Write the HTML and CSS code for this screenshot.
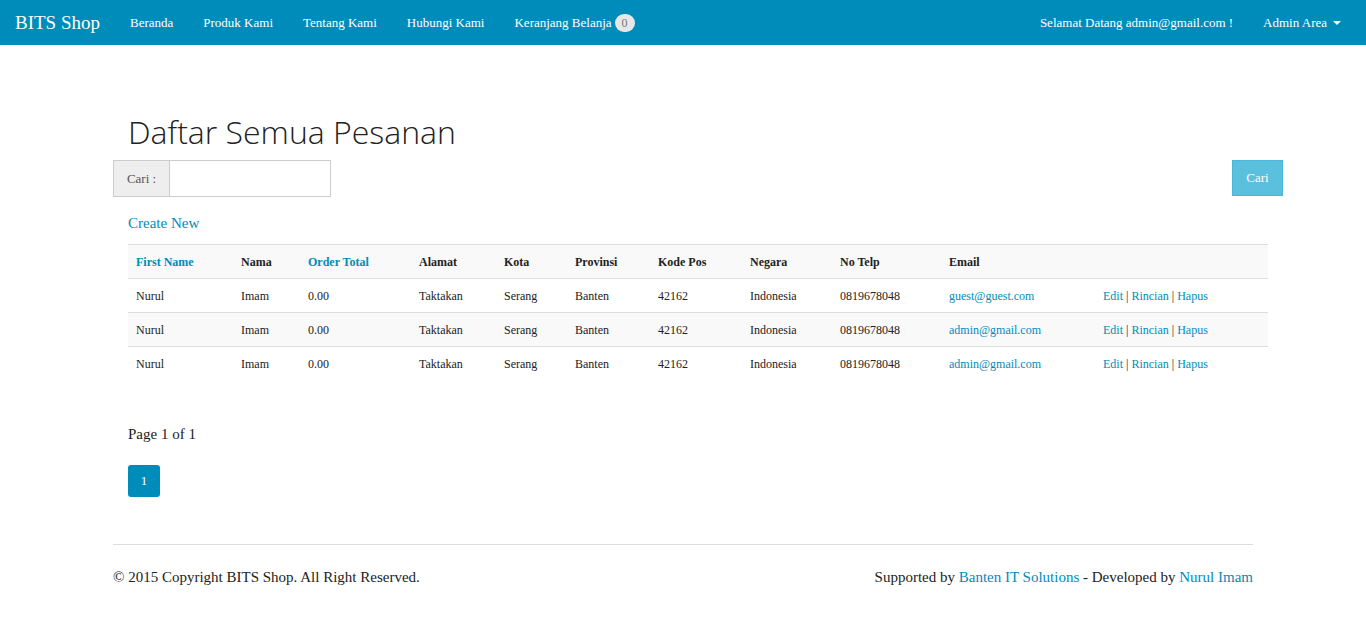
FILE: index.html
```html
<!DOCTYPE html>
<html>
<head>
<meta charset="utf-8">
<link rel="stylesheet" href="styles.css">
</head>
<body>
<nav class="navbar">
  <div class="nav-left">
    <a class="brand" href="#">BITS Shop</a>
    <a class="nav-link" href="#">Beranda</a>
    <a class="nav-link" href="#">Produk Kami</a>
    <a class="nav-link" href="#">Tentang Kami</a>
    <a class="nav-link" href="#">Hubungi Kami</a>
    <a class="nav-link" href="#">Keranjang Belanja <span class="badge">0</span></a>
  </div>
  <div class="nav-right">
    <a class="nav-link" href="#">Selamat Datang admin@gmail.com !</a>
    <a class="nav-link dropdown" href="#">Admin Area <span class="caret"></span></a>
  </div>
</nav>

<main class="container">
  <h2 class="title">Daftar Semua Pesanan</h2>
  <div class="search-row">
    <div class="input-group">
      <span class="addon">Cari :</span>
      <input class="form-control" type="text">
    </div>
    <button class="btn-info">Cari</button>
  </div>
  <p class="create"><a href="#">Create New</a></p>
  <table class="table">
    <thead>
      <tr>
        <th class="c1"><a href="#">First Name</a></th>
        <th class="c2">Nama</th>
        <th class="c3"><a href="#">Order Total</a></th>
        <th class="c4">Alamat</th>
        <th class="c5">Kota</th>
        <th class="c6">Provinsi</th>
        <th class="c7">Kode Pos</th>
        <th class="c8">Negara</th>
        <th class="c9">No Telp</th>
        <th class="c10">Email</th>
        <th class="c11"></th>
      </tr>
    </thead>
    <tbody>
      <tr>
        <td>Nurul</td><td>Imam</td><td>0.00</td><td>Taktakan</td><td>Serang</td><td>Banten</td><td>42162</td><td>Indonesia</td><td>0819678048</td>
        <td><a href="#">guest@guest.com</a></td>
        <td><a href="#">Edit</a> | <a href="#">Rincian</a> | <a href="#">Hapus</a></td>
      </tr>
      <tr>
        <td>Nurul</td><td>Imam</td><td>0.00</td><td>Taktakan</td><td>Serang</td><td>Banten</td><td>42162</td><td>Indonesia</td><td>0819678048</td>
        <td><a href="#">admin@gmail.com</a></td>
        <td><a href="#">Edit</a> | <a href="#">Rincian</a> | <a href="#">Hapus</a></td>
      </tr>
      <tr>
        <td>Nurul</td><td>Imam</td><td>0.00</td><td>Taktakan</td><td>Serang</td><td>Banten</td><td>42162</td><td>Indonesia</td><td>0819678048</td>
        <td><a href="#">admin@gmail.com</a></td>
        <td><a href="#">Edit</a> | <a href="#">Rincian</a> | <a href="#">Hapus</a></td>
      </tr>
    </tbody>
  </table>
  <p class="pageinfo">Page 1 of 1</p>
  <div class="pagination"><a class="page active" href="#">1</a></div>
  <hr class="rule">
  <footer class="footer">
    <span>© 2015 Copyright BITS Shop. All Right Reserved.</span>
    <span>Supported by <a href="#">Banten IT Solutions</a> - Developed by <a href="#">Nurul Imam</a></span>
  </footer>
</main>
</body>
</html>
```
FILE: styles.css
```css
* { box-sizing: border-box; }
body {
  margin: 0;
  font-family: "Liberation Serif", "Times New Roman", serif;
  font-size: 15px;
  color: #222;
  background: #fff;
}
a { color: #008cba; text-decoration: none; }

.navbar {
  height: 45px;
  background: #008cba;
  display: flex;
  justify-content: space-between;
  align-items: center;
  padding: 0 10px 0 15px;
}
.nav-left, .nav-right { display: flex; align-items: center; }
.brand { color: #fff; font-size: 19px; margin-right: 15px; }
.nav-link { color: #fff; font-size: 13px; padding: 0 15px; display: flex; align-items: center; }
.badge {
  display: inline-block;
  background: #e7e7e7;
  color: #777;
  font-size: 12px;
  border-radius: 10px;
  padding: 2px 7px;
  margin-left: 3px;
  line-height: 14px;
}
.caret {
  display: inline-block;
  width: 0; height: 0;
  border-left: 4px solid transparent;
  border-right: 4px solid transparent;
  border-top: 4px solid #fff;
  margin-left: 6px;
}

.container { width: 1140px; margin: 0 auto; }
.title {
  font-family: "Open Sans", sans-serif;
  font-weight: 300;
  font-size: 32px;
  color: #222;
  margin: 65px 0 0 15px;
  line-height: 44px;
}
.search-row {
  display: flex;
  justify-content: space-between;
  margin-top: 6px;
  margin-right: -30px;
}
.input-group { display: flex; height: 37px; }
.addon {
  width: 57px;
  background: #eee;
  border: 1px solid #ccc;
  color: #555;
  font-size: 13px;
  display: flex; align-items: center; justify-content: center;
}
.form-control {
  width: 161px;
  border: 1px solid #ccc;
  border-left: 0;
  font-size: 13px;
}
.btn-info {
  width: 51px;
  height: 36px;
  background: #5bc0de;
  border: 1px solid #46b8da;
  color: #fff;
  font-family: inherit;
  font-size: 13px;
}
.create { margin: 18px 0 0 15px; font-size: 15px; line-height: 17px; }

.table {
  width: 1140px;
  margin: 12px 0 0 15px;
  border-collapse: collapse;
  table-layout: fixed;
  font-size: 12px;
}
.table th, .table td {
  text-align: left;
  padding: 1px 8px 0;
  height: 34px;
  border-top: 1px solid #ddd;
  vertical-align: middle;
  white-space: nowrap;
}
.table thead tr { background: #f9f9f9; border-bottom: 1px solid #ddd; }
.table th { font-weight: bold; color: #222; }
.table tbody tr:nth-child(even) { background: #f9f9f9; }
.c1 { width: 105px; } .c2 { width: 67px; } .c3 { width: 111px; }
.c4 { width: 85px; } .c5 { width: 71px; } .c6 { width: 83px; }
.c7 { width: 92px; } .c8 { width: 90px; } .c9 { width: 109px; }
.c10 { width: 154px; } .c11 { width: 173px; }

.pageinfo { margin: 43px 0 0 15px; font-size: 15px; line-height: 20px; }
.pagination { margin: 21px 0 0 15px; display: flex; }
.page {
  width: 32px; height: 32px;
  background: #008cba;
  color: #fff;
  border-radius: 3px;
  font-size: 13px;
  display: flex; align-items: center; justify-content: center;
}
.rule { border: 0; border-top: 1px solid #ddd; margin: 47px 0 0 0; }
.footer {
  display: flex;
  justify-content: space-between;
  margin-top: 24px;
  font-size: 15px;
}
```
